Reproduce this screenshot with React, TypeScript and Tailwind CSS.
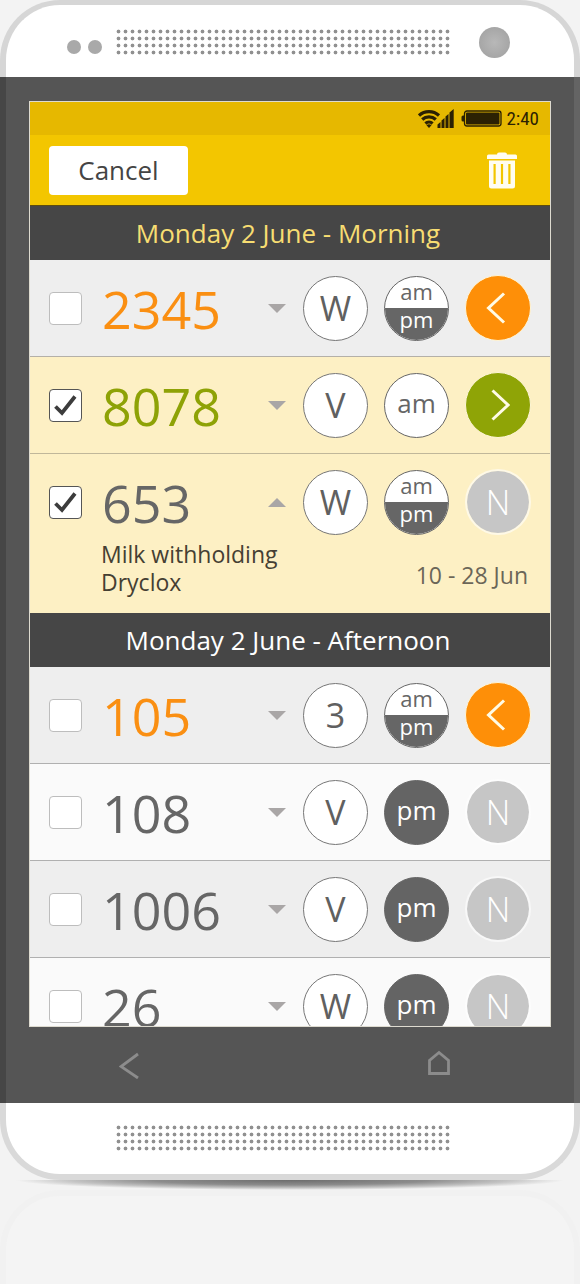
import { useState } from "react";

type Result = "back" | "forward" | "none";
type Session = "am" | "pm" | "both";

interface Entry {
  id: string;
  tone: string;
  shade: string;
  code: string;
  session: Session;
  result: Result;
  checked?: boolean;
  notes?: string[];
  dates?: string;
}

const morning: Entry[] = [
  { id: "2345", tone: "text-[#fa8f12]", shade: "bg-[#eeeeee] border-[#b4b0a8]", code: "W", session: "both", result: "back" },
  { id: "8078", tone: "text-[#8ea206]", shade: "bg-[#fdf0c4] border-[#c0b79a]", code: "V", session: "am", result: "forward", checked: true },
  {
    id: "653",
    tone: "text-[#666]",
    shade: "bg-[#fdf0c4] border-[#fdf0c4]",
    code: "W",
    session: "both",
    result: "none",
    checked: true,
    notes: ["Milk withholding", "Dryclox"],
    dates: "10 - 28 Jun",
  },
];

const afternoon: Entry[] = [
  { id: "105", tone: "text-[#fa8f12]", shade: "bg-[#eeeeee] border-[#b0b0b0]", code: "3", session: "both", result: "back" },
  { id: "108", tone: "text-[#666]", shade: "bg-[#fafafa] border-[#b0b0b0]", code: "V", session: "pm", result: "none" },
  { id: "1006", tone: "text-[#666]", shade: "bg-[#eeeeee] border-[#b0b0b0]", code: "V", session: "pm", result: "none" },
  { id: "26", tone: "text-[#666]", shade: "bg-[#fafafa] border-[#b0b0b0]", code: "W", session: "pm", result: "none" },
];

function Speaker() {
  return (
    <div className="h-7 w-[336px] bg-[radial-gradient(circle,#909090_1.4px,transparent_2.3px)] bg-size-[7px_7px]" />
  );
}

function SessionButton({ session }: { session: Session }) {
  if (session === "both") {
    return (
      <button className="flex size-[65px] shrink-0 flex-col overflow-hidden rounded-full border border-[#666] bg-white text-[22px] leading-7">
        <span className="h-[31px] w-full text-[#666]">am</span>
        <span className="w-full flex-1 bg-[#666] leading-[22px] text-white">pm</span>
      </button>
    );
  }
  const look = session === "am" ? "bg-white text-[#666]" : "bg-[#646464] text-white";
  return (
    <button className={`size-[65px] shrink-0 rounded-full border border-[#666] pb-1 text-[26px] leading-none ${look}`}>
      {session}
    </button>
  );
}

function ResultButton({ result }: { result: Result }) {
  if (result === "none") {
    return (
      <button className="size-[66px] shrink-0 rounded-full border-2 border-white/60 bg-[#c6c6c6] bg-clip-padding text-[34px] leading-none font-light text-white">
        N
      </button>
    );
  }
  const back = result === "back";
  return (
    <button
      aria-label={back ? "Move back" : "Move forward"}
      className={`flex size-[66px] shrink-0 items-center justify-center rounded-full border border-[#fff6d8] ${back ? "bg-[#fe8f08]" : "bg-[#8fa406]"}`}
    >
      <svg width="24" height="32" viewBox="0 0 24 32" fill="none" stroke="#fffbe6" strokeWidth="3">
        <path d={back ? "M18 1.500 2.500 16 18 30.500" : "M6.500 1.500 22 16 6.500 30.500"} />
      </svg>
    </button>
  );
}

function EntryRow({ entry }: { entry: Entry }) {
  const [checked, setChecked] = useState(Boolean(entry.checked));
  const open = Boolean(entry.notes);
  return (
    <li className={`border-b ${entry.shade}`}>
      <div className="flex h-24 items-center gap-4 px-[19px]">
        <label className="flex min-w-0 flex-1 items-center gap-5">
          <span className="grid shrink-0">
            <input
              type="checkbox"
              checked={checked}
              onChange={() => setChecked(!checked)}
              className="peer col-start-1 row-start-1 size-[33px] appearance-none rounded border border-[#bdbdbd] bg-white checked:border-[#555]"
            />
            <svg
              viewBox="0 0 33 33"
              className="pointer-events-none invisible col-start-1 row-start-1 size-[33px] peer-checked:visible"
              fill="none"
              stroke="#3c3c3c"
              strokeWidth="3.800"
            >
              <path d="M6.500 17.500 13 24 26 7.500" />
            </svg>
          </span>
          <span className={`pt-0.5 text-[52px] leading-none ${entry.tone}`}>{entry.id}</span>
        </label>
        <button aria-label={open ? "Hide details" : "Show details"} className="flex w-5 shrink-0 justify-center">
          <svg width="18" height="9" viewBox="0 0 18 9" fill="#a9a6a6">
            <path d={open ? "M0 9h18L9 0z" : "M0 0h18L9 9z"} />
          </svg>
        </button>
        <button className="size-[65px] shrink-0 rounded-full border border-[#777] bg-white text-[34px] leading-none text-[#606060]">
          {entry.code}
        </button>
        <SessionButton session={entry.session} />
        <ResultButton result={entry.result} />
      </div>
      {entry.notes && (
        <div className="-mt-2.5 flex items-center justify-between pr-[22px] pb-4 pl-[71px]">
          <div className="text-[23px] leading-7 text-[#453f33]">
            {entry.notes.map((note) => (
              <p key={note}>{note}</p>
            ))}
          </div>
          <p className="pt-3.5 text-[23px] leading-7 text-[#6b6658]">{entry.dates}</p>
        </div>
      )}
    </li>
  );
}

function Section({ title, tone, entries }: { title: string; tone: string; entries: Entry[] }) {
  return (
    <section>
      <h2 className={`h-[54px] bg-[#464646] pr-1 text-center text-[26px] leading-[54px] ${tone}`}>{title}</h2>
      <ul>
        {entries.map((entry) => (
          <EntryRow key={entry.id} entry={entry} />
        ))}
      </ul>
    </section>
  );
}

function StatusBar() {
  return (
    <div className="flex h-[33px] items-center justify-end bg-[#e6b800] pr-[11px] text-[#2b2103]">
      <svg width="37" height="20" viewBox="0 0 37 20" fill="none" stroke="currentColor" strokeWidth="3.200">
        <path d="M1 6.500a15 15 0 0 1 20 0M4.200 10.500a10 10 0 0 1 13.600 0M7.400 14.500a5.500 5.500 0 0 1 7.200 0" />
        <path d="M8.500 16.200 11 19l2.500-2.800a4 4 0 0 0-5 0z" fill="currentColor" stroke="none" />
        <path d="M19.500 19v-3.500l3-2.500V19zM23.500 19v-7.500l3-2.500v10zM27.500 19V7.500L30.500 5v14zM31.500 19V3.500L35.700 0v19z" fill="currentColor" stroke="none" />
      </svg>
      <svg width="41" height="17" viewBox="0 0 41 17" className="ml-1.5">
        <path d="M3 5.500H2a1.500 1.500 0 0 0-1.500 1.500v3A1.500 1.500 0 0 0 2 11.500h1z" fill="currentColor" />
        <rect x="3.500" y="1" width="36.500" height="15" rx="2.500" fill="none" stroke="currentColor" strokeWidth="1.300" />
        <rect x="5" y="2.500" width="33.500" height="12" rx="1" fill="currentColor" />
      </svg>
      <span className="ml-1 font-['Roboto_Condensed','Liberation_Sans_Narrow',Roboto,sans-serif] text-[19px] leading-none">2:40</span>
    </div>
  );
}

export default function App() {
  return (
    <div className="min-h-screen overflow-hidden bg-[#f3f3f3] font-['Open_Sans',sans-serif]">
      <div className="flex h-[calc(100vh-104px)] flex-col">
        <div className="flex h-[77px] shrink-0 items-center justify-between rounded-t-[60px] border-x-[6px] border-t-[5px] border-[#d6d6d6] bg-white pt-0.5 pr-16 pl-[61px]">
          <div className="flex items-center gap-[13px]">
            <div className="flex gap-[7px] pt-2.5">
              <span className="size-3.5 rounded-full bg-[#a9a9a9]" />
              <span className="size-3.5 rounded-full bg-[#a9a9a9]" />
            </div>
            <Speaker />
          </div>
          <span className="size-[31px] rounded-full bg-[radial-gradient(circle,#b8b8b8,#a6a6a6_70%)]" />
        </div>

        <div className="flex min-h-0 flex-1 flex-col border-r-[6px] border-l-[6px] border-r-[#646464] border-l-[#464646] bg-[#555] px-[23px] pt-6">
          <div className="flex min-h-0 flex-1 flex-col border border-[#dedbd0]">
            <StatusBar />
            <header className="flex h-[71px] shrink-0 items-center justify-between border-b border-[#5c4d10] bg-[#f3c600] pr-[33px] pl-[19px]">
              <button className="h-[49px] w-[139px] rounded bg-white text-[26px] leading-none text-[#444]">Cancel</button>
              <button aria-label="Delete">
                <svg width="30" height="37" viewBox="0 0 30 37" fill="#fffdf2">
                  <path d="M10 2.500Q10 .5 12 .5h6q2 0 2 2h8.500Q30 2.500 30 4v3H0V4q0-1.500 1.500-1.500z" />
                  <path
                    fillRule="evenodd"
                    d="M2 8.500h26V34q0 2.500-2.500 2.500h-21Q2 36.500 2 34zM6.500 12v20h2.200V12zM13.900 12v20h2.200V12zM21.300 12v20h2.200V12z"
                  />
                </svg>
              </button>
            </header>
            <main className="min-h-0 flex-1 overflow-y-auto [scrollbar-width:none]">
              <Section title="Monday 2 June - Morning" tone="text-[#f7dd72]" entries={morning} />
              <Section title="Monday 2 June - Afternoon" tone="text-white" entries={afternoon} />
            </main>
          </div>
          <nav className="flex h-[76px] shrink-0 items-center justify-between pr-[100px] pl-[90px]">
            <button aria-label="Back">
              <svg width="20" height="27" viewBox="0 0 20 27" fill="none" stroke="#8c8c8c" strokeWidth="2.800">
                <path d="M19 2 2 14.500 19 26" />
              </svg>
            </button>
            <button aria-label="Home" className="pb-1">
              <svg width="24" height="26" viewBox="0 0 24 26" fill="none" stroke="#8c8c8c" strokeWidth="2.800">
                <path d="M2.500 23.500V10.500L12 2.500l9.500 8v13z" />
              </svg>
            </button>
          </nav>
        </div>

        <div className="flex h-[77px] shrink-0 justify-center rounded-b-[60px] border-x-[6px] border-b-[6px] border-[#d9d9d9] bg-white pt-[21px] pr-3.5">
          <Speaker />
        </div>
      </div>

      <div className="px-4">
        <div className="h-2.5 bg-[radial-gradient(ellipse_50%_100%_at_50%_0%,#6c6c6c,#8c8c8c_50%,#c4c4c4_80%,transparent)]" />
      </div>
      <div className="h-[94px] rounded-t-[60px] border-x-[6px] border-t-[6px] border-[#f1f1f1] bg-[#f4f4f4]" />
    </div>
  );
}
